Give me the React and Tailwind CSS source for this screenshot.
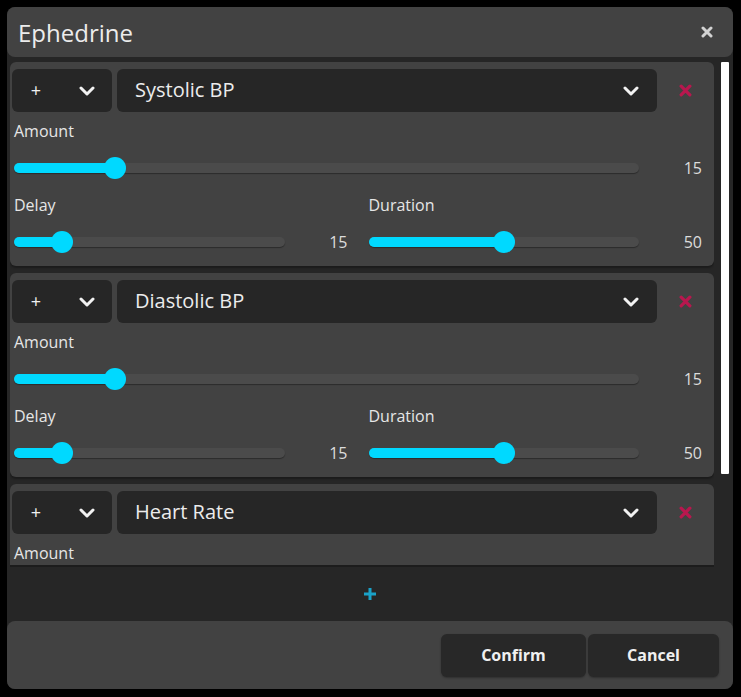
const FONT = { fontFamily: '"Open Sans", "Noto Sans", sans-serif' }

const effects = [
  { id: 1, name: 'Systolic BP', amount: 15, delay: 15, duration: 50 },
  { id: 2, name: 'Diastolic BP', amount: 15, delay: 15, duration: 50 },
  { id: 3, name: 'Heart Rate', amount: 15, delay: 15, duration: 50 },
]

function Chevron({ className = '' }) {
  return (
    <svg width="16" height="10" viewBox="0 0 16 10" className={className}>
      <polyline points="2,2 8,8 14,2" fill="none" stroke="#f2f2f2" strokeWidth="3" strokeLinecap="round" strokeLinejoin="round" />
    </svg>
  )
}

function Cross({ color, size = 12, stroke = 3 }) {
  return (
    <svg width={size} height={size} viewBox="0 0 12 12">
      <path d="M2 2 L10 10 M10 2 L2 10" stroke={color} strokeWidth={stroke} strokeLinecap="round" />
    </svg>
  )
}

/**
 * Slider con valor 0..100 — el pulgar se mueve dentro del track
 */
function Slider({ value }) {
  const pos = `calc(11px + (100% - 22px) * ${value / 100})`
  return (
    <div className="relative flex-1 h-[22px] flex items-center">
      <div className="w-full h-[10px] rounded-full bg-[#4b4b4b] shadow-[0_1px_1px_rgba(0,0,0,0.35)]" />
      <div className="absolute left-0 top-[6px] h-[10px] rounded-full bg-[#00d9ff]" style={{ width: pos }} />
      <div
        className="absolute top-0 w-[22px] h-[22px] -ml-[11px] rounded-full bg-[#00d9ff]"
        style={{ left: pos }}
      />
    </div>
  )
}

function Field({ label, value }) {
  return (
    <div className="flex flex-col">
      <div className="h-[22px] pt-[1px] leading-[22px] text-[16px] text-[#e6e6e6]">{label}</div>
      <div className="mt-[16px] flex items-center h-[22px]">
        <Slider value={value} />
        <div className="w-[63px] text-right text-[16px] leading-[22px] text-[#dcdcdc]">{value}</div>
      </div>
    </div>
  )
}

function EffectCard({ effect }) {
  return (
    <div className="shrink-0 h-[204px] rounded-[6px] bg-[#424242] pt-[7px] shadow-[0_2px_2px_rgba(0,0,0,0.3)]">
      {/* Operador + parámetro + borrar */}
      <div className="flex h-[43px] ml-[2px]">
        <div className="w-[100px] rounded-[6px] bg-[#262626] flex items-center">
          <span className="ml-[18px] w-[12px] text-center text-[18px] leading-none text-[#f0f0f0] -mt-[1px]">+</span>
          <Chevron className="ml-auto mr-[17px]" />
        </div>
        <div className="ml-[5px] flex-1 rounded-[6px] bg-[#262626] flex items-center pl-[18px] pr-[18px]">
          <span className="text-[20px] leading-[28px] text-[#ececec] -mt-[2px]">{effect.name}</span>
          <Chevron className="ml-auto" />
        </div>
        <div className="w-[57px] flex items-center justify-center">
          <Cross color="#b8174e" size={13} />
        </div>
      </div>

      <div className="ml-[4px] mr-[12px] mt-[7px]">
        <Field label="Amount" value={effect.amount} />
        <div className="grid grid-cols-2 gap-x-[21px] mt-[14px]">
          <Field label="Delay" value={effect.delay} />
          <Field label="Duration" value={effect.duration} />
        </div>
      </div>
    </div>
  )
}

export default function App() {
  return (
    <div className="w-[741px] h-[697px] bg-black pt-[7px] pl-[7px]" style={FONT}>
      <div className="w-[726px] h-[682px] rounded-[8px] bg-[#262626] flex flex-col">
        {/* Title bar */}
        <div className="h-[50px] shrink-0 rounded-[8px] bg-[#424242] flex items-center pl-[11px] pr-[20px]">
          <span className="text-[24px] leading-[32px] pt-[2px] text-[#ececec]">Ephedrine</span>
          <div className="ml-auto">
            <Cross color="#d2d2d2" />
          </div>
        </div>

        {/* Scrollable list */}
        <div className="mt-[3px] h-[507px] shrink-0 flex">
          <div className="ml-[3px] w-[704px] overflow-hidden flex flex-col gap-[7px] pt-[2px] border-b-2 border-[#1c1c1c]">
            {effects.map((e) => (
              <EffectCard key={e.id} effect={e} />
            ))}
          </div>
          <div className="flex-1 pt-[2px]">
            <div className="ml-[7px] w-[8px] h-[412px] bg-white rounded-[1px]" />
          </div>
        </div>

        {/* Add */}
        <div className="h-[54px] shrink-0 flex items-center justify-center">
          <svg width="14" height="14" viewBox="0 0 14 14">
            <path d="M7 1 V13 M1 7 H13" stroke="#1aa2c8" strokeWidth="3" />
          </svg>
        </div>

        {/* Footer */}
        <div className="h-[68px] shrink-0 rounded-[8px] bg-[#424242] flex justify-end items-start pt-[13px] pr-[14px] gap-[2px]">
          <button className="w-[145px] h-[43px] pb-[2px] rounded-[6px] bg-[#282828] text-[16px] font-bold text-[#f0f0f0] shadow-[0_1px_2px_rgba(0,0,0,0.3)]">
            Confirm
          </button>
          <button className="w-[131px] h-[43px] pb-[2px] rounded-[6px] bg-[#282828] text-[16px] font-bold text-[#f0f0f0] shadow-[0_1px_2px_rgba(0,0,0,0.3)]">
            Cancel
          </button>
        </div>
      </div>
    </div>
  )
}
